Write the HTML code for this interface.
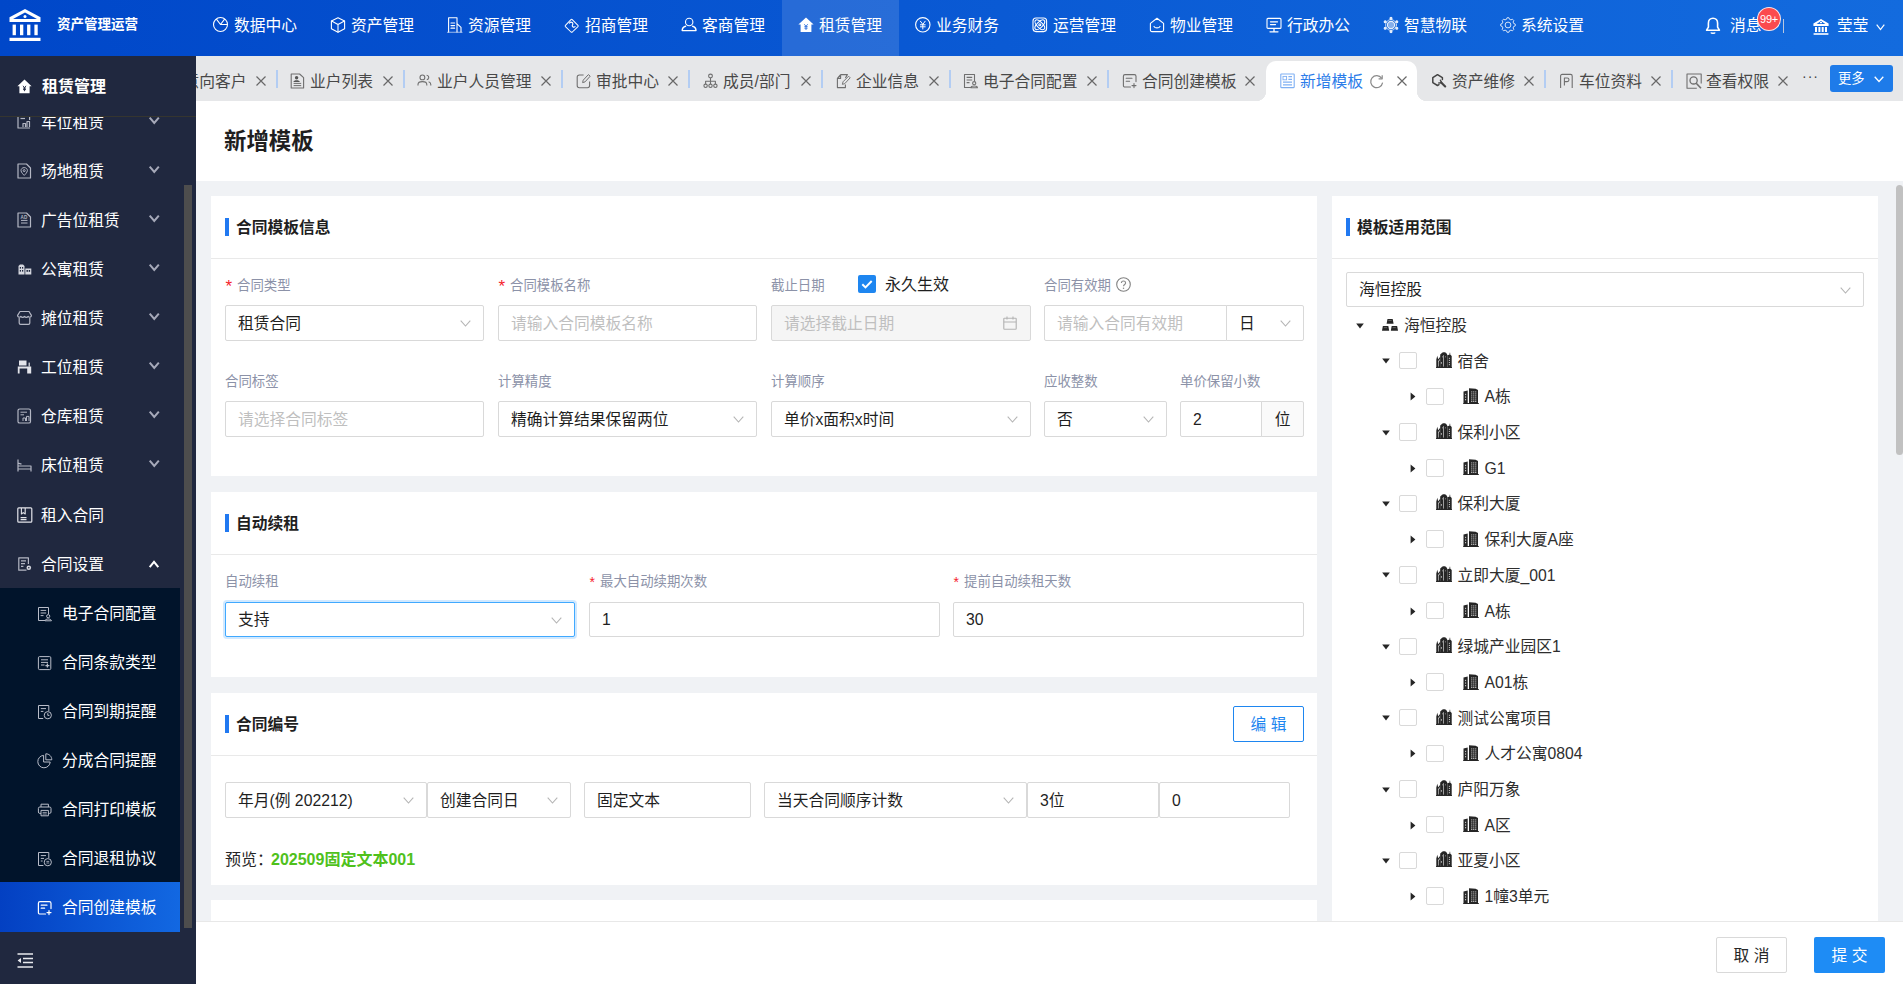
<!DOCTYPE html>
<html lang="zh-CN"><head><meta charset="utf-8"><title>新增模板</title>
<style>
*{box-sizing:border-box;margin:0;padding:0}
html,body{width:1903px;height:984px;overflow:hidden;background:#f0f2f5;}
body{font-family:"Liberation Sans","Noto Sans CJK SC",sans-serif;font-size:15.75px;color:#1f1f1f;position:relative;-webkit-font-smoothing:antialiased;}
.abs{position:absolute}
.t{position:absolute;white-space:nowrap;line-height:24px;height:24px}
svg{position:absolute;overflow:visible}
#hdr{position:absolute;left:0;top:0;width:1903px;height:56px;background:linear-gradient(90deg,#0047c9 0%,#136bde 100%)}
#hdr .t{color:#fff;font-size:15.75px}
#navact{position:absolute;left:782px;top:0;width:117px;height:56px;background:rgba(255,255,255,.13)}
#side{position:absolute;left:0;top:56px;width:196px;height:928px;background:#20283f;overflow:hidden}
#side .t{color:#fff;font-size:15.75px}
#sub{position:absolute;left:0;top:532px;width:180px;height:294px;background:#01142b}
#sel{position:absolute;left:0;top:826px;width:180px;height:50px;background:linear-gradient(90deg,#0340c2,#1268e2)}
#sidehead{position:absolute;left:0;top:0;width:196px;height:61px;background:#20283f;border-bottom:1px solid #35352f}
#thumb{position:absolute;left:184px;top:129px;width:8px;height:743px;background:#4d4d4d}
#tabs{position:absolute;left:196px;top:56px;width:1707px;height:44.6px;background:#e6e7e9;overflow:hidden}
#tabs .t{font-size:15.75px;color:#484848}
.sep{position:absolute;top:14px;width:2px;height:18px;background:#b3cdf3}
#acttab{position:absolute;left:1070px;top:5px;width:151px;height:39.6px;background:#fff;border-radius:10px 10px 0 0}
#acttab:before{content:"";position:absolute;left:-10px;bottom:0;width:10px;height:10px;background:radial-gradient(circle at 0 0,rgba(255,255,255,0) 10px,#fff 10.5px)}
#acttab:after{content:"";position:absolute;right:-10px;bottom:0;width:10px;height:10px;background:radial-gradient(circle at 100% 0,rgba(255,255,255,0) 10px,#fff 10.5px)}
#more{position:absolute;left:1634px;top:9px;width:63px;height:27px;background:#1e7be9;border-radius:3px}
#title{position:absolute;left:196px;top:100.6px;width:1707px;height:80.4px;background:#fff}
.card{position:absolute;background:#fff}
.ct{position:absolute;font-size:15.75px;font-weight:bold;color:#1f1f1f;line-height:24px;white-space:nowrap}
.bar{position:absolute;width:3.5px;height:18px;background:#2179f1}
.hr{position:absolute;height:1px;background:#e9e9e9}
.lb{position:absolute;font-size:13.4px;color:#8c92a8;line-height:20px;white-space:nowrap}
.req{position:absolute;left:0;top:0;color:#f5222d}
.in{position:absolute;border:1px solid #d9d9d9;border-radius:2px;background:#fff;font-size:15.75px;line-height:34px;padding-left:12px;white-space:nowrap;color:#1f1f1f;overflow:hidden}
.ph{color:#bfbfbf}
.dis{background:#f5f5f5}
.chk{position:absolute;width:17.5px;height:17.5px;border:1px solid #d9d9d9;border-radius:2px;background:#fff}
.tr{position:absolute;font-size:15.75px;line-height:24px;white-space:nowrap;color:#2e2e2e}
#foot{position:absolute;left:196px;top:921px;width:1707px;height:63px;background:#fff;border-top:1px solid #e8e8e8}
.btn{position:absolute;border-radius:2px;font-size:15.75px;text-align:center;white-space:nowrap}
</style></head>
<body>
<div id="hdr">
<div id="navact"></div>
<svg style="left:9px;top:9px" width="32" height="32" viewBox="0 0 32 32"><g fill="#fff"><path d="M16 0L31.5 8.2V13H0.5V8.2z M16 3.6L4 10H28z" fill-rule="evenodd"/><circle cx="16" cy="7.6" r="1.5"/><rect x="3.6" y="15.6" width="3.3" height="10.6"/><rect x="11" y="15.6" width="3.3" height="10.6"/><rect x="18.1" y="15.6" width="3.3" height="10.6"/><rect x="25.4" y="15.6" width="3.3" height="10.6"/><rect x="0.5" y="28.8" width="31" height="3.2"/></g></svg>
<div class="t" style="left:57px;top:13px;font-size:13.5px;font-weight:bold">资产管理运营</div>
<svg style="left:213px;top:17px" width="16" height="16" viewBox="0 0 16 16"><g fill="none" stroke="#fff" stroke-width="1.1" stroke-linejoin="round" stroke-linecap="round"><circle cx="7.5" cy="7.5" r="7"/><path d="M7.5 7.5L3.6 2.4M7.5 7.5L11.6 2.2M7.5 7.5H14.3"/></g></svg>
<div class="t" style="left:234px;top:13.5px;">数据中心</div>
<svg style="left:330px;top:17px" width="16" height="16" viewBox="0 0 16 16"><g fill="none" stroke="#fff" stroke-width="1.1" stroke-linejoin="round" stroke-linecap="round"><path d="M8 0.8L14.6 4V11.8L8 15.2L1.4 11.8V4z"/><path d="M1.6 4.1L8 7.4L14.4 4.1M8 7.4V15"/></g></svg>
<div class="t" style="left:351px;top:13.5px;">资产管理</div>
<svg style="left:447px;top:17px" width="16" height="16" viewBox="0 0 16 16"><g fill="none" stroke="#fff" stroke-width="1.1" stroke-linejoin="round" stroke-linecap="round"><path d="M1.6 15V0.8H10V15M10 6.6L14 10.4V15"/><path d="M4 6H7.6M4 8.6H7.6M4 11.2H7.6" stroke-width="1.2"/><path d="M0.4 15.3H15" opacity=".6"/></g></svg>
<div class="t" style="left:468px;top:13.5px;">资源管理</div>
<svg style="left:564px;top:17px" width="16" height="16" viewBox="0 0 16 16"><g fill="none" stroke="#fff" stroke-width="1.1" stroke-linejoin="round" stroke-linecap="round" transform="translate(0.6 1.1) scale(.92)"><path d="M6.9 1.7Q7.6 1 8.3 1.7L14.5 7.8Q15.1 8.5 14.5 9.2L8.4 15.1Q7.7 15.7 7 15.1L0.9 9.2Q0.3 8.5 0.9 7.8z"/><path d="M5.2 5.4C7.2 3.2 10 5.4 8.6 7.4C7.6 8.8 9.6 10.8 11.4 9.2" stroke-width="1.2"/></g></svg>
<div class="t" style="left:585px;top:13.5px;">招商管理</div>
<svg style="left:681px;top:17px" width="16" height="16" viewBox="0 0 16 16"><g fill="none" stroke="#fff" stroke-width="1.1" stroke-linejoin="round" stroke-linecap="round"><circle cx="8.2" cy="5" r="3.7"/><path d="M4.6 9.2C2.4 9.8 1.2 11.4 1.2 13.6H15C15 11.4 13.8 9.8 11.6 9.2" stroke-width="1.4"/></g></svg>
<div class="t" style="left:702px;top:13.5px;">客商管理</div>
<svg style="left:798px;top:17px" width="16" height="16" viewBox="0 0 16 16"><path d="M8 0.6L15.6 7.6H13.4V15H2.6V7.6H0.4z" fill="#fff"/><path d="M6.3 7.2L8 9.3L9.7 7.2M6.4 9.6H9.6M6.4 11.2H9.6M8 9.3V13" stroke="#2f6fdc" stroke-width="0.9" fill="none"/></svg>
<div class="t" style="left:819px;top:13.5px;">租赁管理</div>
<svg style="left:915px;top:17px" width="16" height="16" viewBox="0 0 16 16"><g fill="none" stroke="#fff" stroke-width="1.1" stroke-linejoin="round" stroke-linecap="round"><circle cx="7.8" cy="7.8" r="7.2"/><path d="M5.4 4.2L7.8 7.4L10.2 4.2M5.4 7.8H10.2M5.4 9.8H10.2M7.8 7.4V12" stroke-width="1"/></g></svg>
<div class="t" style="left:936px;top:13.5px;">业务财务</div>
<svg style="left:1032px;top:17px" width="16" height="16" viewBox="0 0 16 16"><g fill="none" stroke="#fff" stroke-width="1.1" stroke-linejoin="round" stroke-linecap="round"><rect x="1" y="1" width="13.6" height="13.6" rx="3"/><ellipse cx="7.8" cy="7.8" rx="6.2" ry="2.8" transform="rotate(45 7.8 7.8)"/><ellipse cx="7.8" cy="7.8" rx="6.2" ry="2.8" transform="rotate(-45 7.8 7.8)"/><circle cx="7.8" cy="7.8" r="1"/></g></svg>
<div class="t" style="left:1053px;top:13.5px;">运营管理</div>
<svg style="left:1149px;top:17px" width="16" height="16" viewBox="0 0 16 16"><g fill="none" stroke="#fff" stroke-width="1.1" stroke-linejoin="round" stroke-linecap="round"><path d="M8 1.2L14.6 6.4V13C14.6 14 14 14.6 13 14.6H3C2 14.6 1.4 14 1.4 13V6.4z"/><path d="M5 9.4C6 11.4 10 11.4 11 9.4"/></g></svg>
<div class="t" style="left:1170px;top:13.5px;">物业管理</div>
<svg style="left:1266px;top:17px" width="16" height="16" viewBox="0 0 16 16"><g fill="none" stroke="#fff" stroke-width="1.1" stroke-linejoin="round" stroke-linecap="round"><rect x="1" y="1.4" width="14" height="10" rx="1"/><path d="M4.5 4.8H11.5M4.5 7.6H9.5M8 11.6V14.4M4 14.8H12" stroke-width="1.3"/></g></svg>
<div class="t" style="left:1287px;top:13.5px;">行政办公</div>
<svg style="left:1383px;top:17px" width="16" height="16" viewBox="0 0 16 16"><g fill="none" stroke="#fff" stroke-width="1.1" stroke-linejoin="round" stroke-linecap="round" opacity=".9"><circle cx="8" cy="8" r="3.6" fill="rgba(255,255,255,.55)"/><circle cx="8" cy="8" r="5.4" stroke-width=".8"/><circle cx="8" cy="1.4" r="1" fill="#fff"/><circle cx="13.8" cy="4.8" r="1" fill="#fff"/><circle cx="13.8" cy="11.2" r="1" fill="#fff"/><circle cx="8" cy="14.6" r="1" fill="#fff"/><circle cx="2.2" cy="11.2" r="1" fill="#fff"/><circle cx="2.2" cy="4.8" r="1" fill="#fff"/></g></svg>
<div class="t" style="left:1404px;top:13.5px;">智慧物联</div>
<svg style="left:1500px;top:17px" width="16" height="16" viewBox="0 0 16 16"><g fill="none" stroke="#fff" stroke-width="0.9" stroke-linejoin="round" opacity=".92"><path d="M7.05 0.76L8.95 0.76L9.53 2.30L10.95 2.89L12.45 2.21L13.79 3.55L13.11 5.05L13.70 6.47L15.24 7.05L15.24 8.95L13.70 9.53L13.11 10.95L13.79 12.45L12.45 13.79L10.95 13.11L9.53 13.70L8.95 15.24L7.05 15.24L6.47 13.70L5.05 13.11L3.55 13.79L2.21 12.45L2.89 10.95L2.30 9.53L0.76 8.95L0.76 7.05L2.30 6.47L2.89 5.05L2.21 3.55L3.55 2.21L5.05 2.89L6.47 2.30z"/><circle cx="8" cy="8" r="2.9"/></g></svg>
<div class="t" style="left:1521px;top:13.5px;">系统设置</div>
<svg style="left:1705px;top:16.5px" width="16" height="18" viewBox="0 0 16 18"><path d="M8 1.2C5.2 1.2 3.4 3.4 3.4 6.2V10.2L1.6 13.2H14.4L12.6 10.2V6.2C12.6 3.4 10.8 1.2 8 1.2z" fill="none" stroke="#fff" stroke-width="1.6" stroke-linejoin="round"/><path d="M6 15.4C6.4 16.6 9.6 16.6 10 15.4" fill="none" stroke="#fff" stroke-width="1.6"/></svg>
<div class="t" style="left:1730px;top:13.5px;">消息</div>
<div class="abs" style="left:1757px;top:7px;width:24px;height:24px;border-radius:12px;background:#fb4b4e;border:1px solid rgba(255,255,255,.85);color:#fff;font-size:11px;line-height:22px;text-align:center;letter-spacing:-.2px">99+</div>
<div class="abs" style="left:1783px;top:19px;width:1px;height:14px;background:rgba(255,240,225,.7)"></div>
<svg style="left:1813px;top:19px" width="16" height="16" viewBox="0 0 16 16"><g fill="#fff"><path d="M8 0L15.6 4.6V7H0.4V4.6z M8 2L3.6 5H12.4z" fill-rule="evenodd"/><rect x="2" y="8" width="2" height="5"/><rect x="5.4" y="8" width="2" height="5"/><rect x="8.7" y="8" width="2" height="5"/><rect x="12" y="8" width="2" height="5"/><rect x="0.6" y="14.2" width="14.8" height="1.6"/><rect x="7" y="3" width="2" height="1.2"/></g></svg>
<div class="t" style="left:1837px;top:13.5px;">莹莹</div>
<svg style="left:1875.5px;top:23.5px" width="9" height="6" viewBox="0 0 9 6"><path d="M0.7 0.7 L4.5 5.5 L8.3 0.7" fill="none" stroke="#fff" stroke-width="1.2"/></svg>
</div>
<div id="side">
<svg style="left:17px;top:58px" width="15" height="16" viewBox="0 0 15 16"><g fill="none" stroke="#b4b7c4" stroke-width="1.2" stroke-linejoin="round"><path d="M1 2V14H13"/><path d="M3.5 4.5H8" /><path d="M6 13V9.5H8.5V13M10 13V7.5H12.5V13M12.6 2V6"/></g></svg>
<div class="t" style="left:41px;top:55.1px;">车位租赁</div>
<svg style="left:149px;top:60.8px" width="10.5" height="6.5" viewBox="0 0 10.5 6.5"><path d="M0.7 0.7 L5.25 6 L9.8 0.7" fill="none" stroke="#a6a9b9" stroke-width="2"/></svg>
<svg style="left:17px;top:107px" width="15" height="16" viewBox="0 0 15 16"><g fill="none" stroke="#b4b7c4" stroke-width="1.2" stroke-linejoin="round"><path d="M1 1H9.5L13.5 5V15H1z"/><path d="M7.2 4.6C9.2 4.6 10.4 6 10.4 7.6C10.4 9.4 7.2 12.4 7.2 12.4C7.2 12.4 4 9.4 4 7.6C4 6 5.2 4.6 7.2 4.6z" stroke-width="1"/><circle cx="7.2" cy="7.6" r="1" stroke-width="1"/></g></svg>
<div class="t" style="left:41px;top:104.1px;">场地租赁</div>
<svg style="left:149px;top:109.8px" width="10.5" height="6.5" viewBox="0 0 10.5 6.5"><path d="M0.7 0.7 L5.25 6 L9.8 0.7" fill="none" stroke="#a6a9b9" stroke-width="2"/></svg>
<svg style="left:17px;top:156px" width="15" height="16" viewBox="0 0 15 16"><g fill="none" stroke="#b4b7c4" stroke-width="1.2" stroke-linejoin="round"><path d="M1 1H9.5L13.5 5V15H1z"/><path d="M4 11H10.5M4 8.4H10.5" stroke-width="1"/></g><text x="3.6" y="7" font-size="4.6" font-family="Liberation Sans,sans-serif" fill="#b4b7c4" font-weight="bold">AD</text></svg>
<div class="t" style="left:41px;top:153.1px;">广告位租赁</div>
<svg style="left:149px;top:158.8px" width="10.5" height="6.5" viewBox="0 0 10.5 6.5"><path d="M0.7 0.7 L5.25 6 L9.8 0.7" fill="none" stroke="#a6a9b9" stroke-width="2"/></svg>
<svg style="left:17px;top:205px" width="15" height="16" viewBox="0 0 15 16"><g fill="#d5d7df"><path d="M1.5 13.5V5L3 3.5H6L7.5 5V13.5z"/><rect x="8.3" y="7.5" width="6" height="6"/></g><g fill="#20283f"><rect x="2.8" y="6" width="1.2" height="1.6"/><rect x="5" y="6" width="1.2" height="1.6"/><rect x="2.8" y="9" width="1.2" height="1.6"/><rect x="5" y="9" width="1.2" height="1.6"/><rect x="9.5" y="9" width="1.4" height="1.8"/><rect x="11.7" y="9" width="1.4" height="1.8"/></g></svg>
<div class="t" style="left:41px;top:202.1px;">公寓租赁</div>
<svg style="left:149px;top:207.8px" width="10.5" height="6.5" viewBox="0 0 10.5 6.5"><path d="M0.7 0.7 L5.25 6 L9.8 0.7" fill="none" stroke="#a6a9b9" stroke-width="2"/></svg>
<svg style="left:17px;top:254px" width="15" height="16" viewBox="0 0 15 16"><g fill="none" stroke="#b4b7c4" stroke-width="1.2" stroke-linejoin="round"><path d="M3 1.5H12L14.4 5.4C14.4 7.4 12 7.8 11.2 6.4C10.2 7.8 8.4 7.8 7.5 6.4C6.6 7.8 4.8 7.8 3.8 6.4C3 7.8 0.6 7.4 0.6 5.4z"/><path d="M2.2 8V13C2.2 14 2.8 14.4 3.6 14.4H11.4C12.2 14.4 12.8 14 12.8 13V8"/></g></svg>
<div class="t" style="left:41px;top:251.1px;">摊位租赁</div>
<svg style="left:149px;top:256.8px" width="10.5" height="6.5" viewBox="0 0 10.5 6.5"><path d="M0.7 0.7 L5.25 6 L9.8 0.7" fill="none" stroke="#a6a9b9" stroke-width="2"/></svg>
<svg style="left:17px;top:303px" width="15" height="16" viewBox="0 0 15 16"><g fill="#e3e4ea"><rect x="2" y="1.5" width="7.5" height="5"/><path d="M0.8 7.5H14.2V14.5H10.2V9.6H2.6V14.5H0.8z"/><rect x="11.6" y="3.6" width="1.2" height="4"/></g></svg>
<div class="t" style="left:41px;top:300.1px;">工位租赁</div>
<svg style="left:149px;top:305.8px" width="10.5" height="6.5" viewBox="0 0 10.5 6.5"><path d="M0.7 0.7 L5.25 6 L9.8 0.7" fill="none" stroke="#a6a9b9" stroke-width="2"/></svg>
<svg style="left:17px;top:352px" width="15" height="16" viewBox="0 0 15 16"><g fill="none" stroke="#b4b7c4" stroke-width="1.2" stroke-linejoin="round"><rect x="1" y="1" width="12.5" height="14" rx="1.6"/><path d="M3.5 4.2H10M3.5 6.8H7" stroke-width="1"/><path d="M6 13V10H8.5V13M9.5 13V8.4H12V13" stroke-width="1"/></g></svg>
<div class="t" style="left:41px;top:349.1px;">仓库租赁</div>
<svg style="left:149px;top:354.8px" width="10.5" height="6.5" viewBox="0 0 10.5 6.5"><path d="M0.7 0.7 L5.25 6 L9.8 0.7" fill="none" stroke="#a6a9b9" stroke-width="2"/></svg>
<svg style="left:17px;top:401px" width="15" height="16" viewBox="0 0 15 16"><g fill="none" stroke="#b4b7c4" stroke-width="1.2" stroke-linejoin="round" stroke-width="1"><path d="M1 2.5V14.5M1 6.2L4.5 7.2M1 9H14V14.5M1 12H14"/></g></svg>
<div class="t" style="left:41px;top:398.1px;">床位租赁</div>
<svg style="left:149px;top:403.8px" width="10.5" height="6.5" viewBox="0 0 10.5 6.5"><path d="M0.7 0.7 L5.25 6 L9.8 0.7" fill="none" stroke="#a6a9b9" stroke-width="2"/></svg>
<svg style="left:17px;top:451px" width="15" height="16" viewBox="0 0 15 16"><g fill="none" stroke="#e3e4ea" stroke-width="1.2" stroke-linejoin="round"><rect x="0.8" y="0.8" width="14" height="14.4" rx="1"/><path d="M4.4 1V7L6.3 5.6L8.2 7V1M3.6 10.6H9.5M3.6 12.6H9.5" stroke-width="1.1"/></g></svg>
<div class="t" style="left:41px;top:448.1px;">租入合同</div>
<svg style="left:17px;top:500px" width="15" height="16" viewBox="0 0 15 16"><g fill="none" stroke="#b4b7c4" stroke-width="1.2" stroke-linejoin="round" stroke-width="1.1"><path d="M9.5 14.2H1.8V1.8H11.4V8"/><path d="M4 4.8H9M4 7.6H8M4 10.4H6.4"/></g><circle cx="11.8" cy="11.8" r="2.3" fill="#d5d7df"/><circle cx="11.8" cy="11.8" r="0.8" fill="#20283f"/></svg>
<div class="t" style="left:41px;top:497.1px;">合同设置</div>
<svg style="left:149px;top:504.5px" width="10" height="6.5" viewBox="0 0 10 6.5"><path d="M0.7 6.2 L5 0.9 L9.3 6.2" fill="none" stroke="#fff" stroke-width="2"/></svg>
<div id="sub"></div><div id="sel"></div>
<svg style="left:37px;top:549.7px" width="16" height="16" viewBox="0 0 16 16"><g fill="none" stroke="#b9bdc9" stroke-width="1" stroke-linejoin="round"><path d="M8 14.5H1.5V1.5H11.5V8"/><path d="M3.6 4.4H9.2M3.6 7H9.2M3.6 9.6H6.5"/><circle cx="11.2" cy="10.2" r="1.6"/><path d="M8 14.8C8 12.4 14.4 12.4 14.4 14.8z"/></g></svg>
<div class="t" style="left:62px;top:546.1px;">电子合同配置</div>
<svg style="left:37px;top:598.7px" width="16" height="16" viewBox="0 0 16 16"><g fill="none" stroke="#b9bdc9" stroke-width="1" stroke-linejoin="round"><rect x="1.4" y="1.6" width="12.4" height="13" rx="1.2"/><path d="M4 4.8H11M4 7.4H11M4 10H7.5"/><path d="M8.4 10.6H12.4M10.4 8.6V12.6" stroke-width="1.3"/></g></svg>
<div class="t" style="left:62px;top:595.1px;">合同条款类型</div>
<svg style="left:37px;top:647.7px" width="16" height="16" viewBox="0 0 16 16"><g fill="none" stroke="#b9bdc9" stroke-width="1" stroke-linejoin="round"><path d="M6.2 14.5H1.5V1.5H11.8V7"/><path d="M3.8 4.6H9M3.8 7.4H6.4"/><circle cx="10.8" cy="11.2" r="3.6"/><path d="M10.8 9.2V11.4H12.4"/></g></svg>
<div class="t" style="left:62px;top:644.1px;">合同到期提醒</div>
<svg style="left:37px;top:696.7px" width="16" height="16" viewBox="0 0 16 16"><g fill="none" stroke="#b9bdc9" stroke-width="1" stroke-linejoin="round" stroke-width="1.2"><path d="M6.6 2.4A6.2 6.2 0 1 0 13.2 9H6.6z"/><path d="M8.8 0.8V6.8H14.8C14.8 3.4 12.2 0.8 8.8 0.8z"/></g></svg>
<div class="t" style="left:62px;top:693.1px;">分成合同提醒</div>
<svg style="left:37px;top:745.7px" width="16" height="16" viewBox="0 0 16 16"><g fill="none" stroke="#b9bdc9" stroke-width="1" stroke-linejoin="round"><path d="M4 5V2.2H11.4V5"/><rect x="1.4" y="5" width="12.6" height="6.4" rx="1.4"/><rect x="4" y="8.4" width="7.4" height="5.4" fill="#01142b"/><path d="M5.6 10.4H9.8M5.6 12H9.8" stroke-width=".8"/></g></svg>
<div class="t" style="left:62px;top:742.1px;">合同打印模板</div>
<svg style="left:37px;top:794.7px" width="16" height="16" viewBox="0 0 16 16"><g fill="none" stroke="#b9bdc9" stroke-width="1" stroke-linejoin="round"><path d="M6.4 14.5H1.5V1.5H11.8V7"/><path d="M3.8 4.6H9M3.8 7.4H7M3.8 10H5.6"/><circle cx="10.8" cy="11.2" r="3.6"/><path d="M9.4 10.4H12.2M9.4 12H12.2" stroke-width=".8"/></g></svg>
<div class="t" style="left:62px;top:791.1px;">合同退租协议</div>
<svg style="left:37px;top:843.7px" width="16" height="16" viewBox="0 0 16 16"><g fill="none" stroke="#fff" stroke-width="1.2" stroke-linejoin="round" stroke-linecap="round"><path d="M8.5 14H3C2 14 1.4 13.4 1.4 12.4V3.2C1.4 2.2 2 1.6 3 1.6H12.4C13.4 1.6 14 2.2 14 3.2V8.6"/><path d="M4.2 5.2H10M4.2 8.2H7.6M12 10.6V14.6M10 12.6H14"/></g></svg>
<div class="t" style="left:62px;top:840.1px;">合同创建模板</div>
<div id="sidehead"></div>
<svg style="left:17px;top:23px" width="15" height="15" viewBox="0 0 15 15"><path d="M7.5 0.6L14.6 7.2H12.6V14.2H2.4V7.2H0.4z" fill="#fff"/><path d="M6 6.8L7.5 8.8L9 6.8M6 9.1H9M6 10.6H9M7.5 8.8V12.2" stroke="#20283f" stroke-width="0.9" fill="none"/></svg>
<div class="t" style="left:42px;top:18.8px;font-weight:bold;font-size:16px">租赁管理</div>
<div id="thumb"></div>
<svg style="left:17px;top:897px" width="16" height="15" viewBox="0 0 16 15"><g fill="none" stroke="#e8e9ee" stroke-width="1.5"><path d="M0.5 1H16M6 5.5H16M6 9.5H16M0.5 14H16"/></g><path d="M0.6 7.5L4 5V10z" fill="#e8e9ee"/></svg>
</div>
<div id="tabs">
<div class="t" style="left:-12.5px;top:13.5px;color:#484848">意向客户</div>
<svg style="left:60px;top:20px" width="10" height="10" viewBox="0 0 10 10"><path d="M0.5 0.5L9.5 9.5M9.5 0.5L0.5 9.5" stroke="#686868" stroke-width="1.2" fill="none"/></svg>
<svg style="left:94px;top:17px" width="16" height="16" viewBox="0 0 16 16"><g fill="none" stroke="#6f6f6f" stroke-width="1.1" stroke-linejoin="round" stroke="#555" stroke-width="1.2"><path d="M1.2 1H9.6L13.6 4.6V15H1.2z"/><path d="M3.6 10.4H11.2M3.6 12.6H11.2" stroke-width="1"/></g><circle cx="6.6" cy="4.8" r="1.7" fill="#555"/><path d="M3.4 9C3.4 6.6 9.8 6.6 9.8 9z" fill="#555"/></svg>
<div class="t" style="left:114px;top:13.5px;color:#484848">业户列表</div>
<svg style="left:187px;top:20px" width="10" height="10" viewBox="0 0 10 10"><path d="M0.5 0.5L9.5 9.5M9.5 0.5L0.5 9.5" stroke="#686868" stroke-width="1.2" fill="none"/></svg>
<svg style="left:221px;top:17px" width="16" height="16" viewBox="0 0 16 16"><g fill="none" stroke="#6f6f6f" stroke-width="1.1" stroke-linejoin="round" stroke="#555" stroke-width="1.2"><circle cx="5.4" cy="4.4" r="2.4"/><path d="M1 12.6V11.4C1 9.6 2.6 8.6 5.4 8.6C8.2 8.6 9.8 9.6 9.8 11.4V12.6"/><path d="M9.6 2.2C11.4 2.4 12 4 11.6 5.2C11.3 6 10.6 6.5 9.8 6.6M11.6 8.8C13 9.2 13.8 10 13.8 11.4V12.6"/></g></svg>
<div class="t" style="left:241px;top:13.5px;color:#484848">业户人员管理</div>
<svg style="left:345px;top:20px" width="10" height="10" viewBox="0 0 10 10"><path d="M0.5 0.5L9.5 9.5M9.5 0.5L0.5 9.5" stroke="#686868" stroke-width="1.2" fill="none"/></svg>
<svg style="left:380px;top:17px" width="16" height="16" viewBox="0 0 16 16"><g fill="none" stroke="#6f6f6f" stroke-width="1.1" stroke-linejoin="round" stroke-width="1.3"><path d="M7.6 2H3.4C2 2 1.2 2.8 1.2 4.2V12.6C1.2 14 2 14.8 3.4 14.8H11.4C12.8 14.8 13.6 14 13.6 12.6V8.4"/><path d="M6.6 9.6L7.2 7.2L12.4 1.6L14.2 3.2L9 8.9z" stroke-width="1"/></g></svg>
<div class="t" style="left:400px;top:13.5px;color:#484848">审批中心</div>
<svg style="left:472px;top:20px" width="10" height="10" viewBox="0 0 10 10"><path d="M0.5 0.5L9.5 9.5M9.5 0.5L0.5 9.5" stroke="#686868" stroke-width="1.2" fill="none"/></svg>
<svg style="left:507px;top:17px" width="16" height="16" viewBox="0 0 16 16"><g fill="none" stroke="#6f6f6f" stroke-width="1.1" stroke-linejoin="round"><circle cx="7.5" cy="3" r="1.9"/><circle cx="2.6" cy="12.8" r="1.7"/><circle cx="7.5" cy="12.8" r="1.7"/><circle cx="12.4" cy="12.8" r="1.7"/><path d="M7.5 5V11M2.6 11V8.2H12.4V11"/></g></svg>
<div class="t" style="left:527px;top:13.5px;color:#484848">成员/部门</div>
<svg style="left:605px;top:20px" width="10" height="10" viewBox="0 0 10 10"><path d="M0.5 0.5L9.5 9.5M9.5 0.5L0.5 9.5" stroke="#686868" stroke-width="1.2" fill="none"/></svg>
<svg style="left:640px;top:17px" width="16" height="16" viewBox="0 0 16 16"><g fill="none" stroke="#6f6f6f" stroke-width="1.1" stroke-linejoin="round" stroke="#8a8a8a" stroke-width="1.2"><path d="M4.6 1.6H11.4L9.4 5M4.6 1.6L1.4 5.4V14.6H9.4V11.6M1.6 5.4H4.6V1.8"/><path d="M6.4 11.4L7 8.8L12.6 3.2L14.2 4.8L8.8 10.6z" stroke="#777" stroke-width="1"/></g></svg>
<div class="t" style="left:660px;top:13.5px;color:#484848">企业信息</div>
<svg style="left:733px;top:20px" width="10" height="10" viewBox="0 0 10 10"><path d="M0.5 0.5L9.5 9.5M9.5 0.5L0.5 9.5" stroke="#686868" stroke-width="1.2" fill="none"/></svg>
<svg style="left:767px;top:17px" width="16" height="16" viewBox="0 0 16 16"><g fill="none" stroke="#6f6f6f" stroke-width="1.1" stroke-linejoin="round" stroke="#8f8f8f"><path d="M8 14.5H1.5V1.5H11.5V8"/><path d="M3.6 4.4H9.2M3.6 7H9.2M3.6 9.6H6.5"/><circle cx="11.2" cy="10.2" r="1.6"/><path d="M8 14.8C8 12.4 14.4 12.4 14.4 14.8z"/></g></svg>
<div class="t" style="left:787px;top:13.5px;color:#484848">电子合同配置</div>
<svg style="left:891px;top:20px" width="10" height="10" viewBox="0 0 10 10"><path d="M0.5 0.5L9.5 9.5M9.5 0.5L0.5 9.5" stroke="#686868" stroke-width="1.2" fill="none"/></svg>
<svg style="left:926px;top:17px" width="16" height="16" viewBox="0 0 16 16"><g fill="none" stroke="#6f6f6f" stroke-width="1.1" stroke-linejoin="round" stroke="#555" stroke-width="1.3" stroke-linecap="round"><path d="M8.5 14H3C2 14 1.4 13.4 1.4 12.4V3.2C1.4 2.2 2 1.6 3 1.6H12.4C13.4 1.6 14 2.2 14 3.2V8.6"/><path d="M4.2 5.2H10M4.2 8.2H7.6M12 10.6V14.6M10 12.6H14" stroke-width="1.1"/></g></svg>
<div class="t" style="left:946px;top:13.5px;color:#484848">合同创建模板</div>
<svg style="left:1049px;top:20px" width="10" height="10" viewBox="0 0 10 10"><path d="M0.5 0.5L9.5 9.5M9.5 0.5L0.5 9.5" stroke="#686868" stroke-width="1.2" fill="none"/></svg>
<div class="sep" style="left:80px"></div>
<div class="sep" style="left:207px"></div>
<div class="sep" style="left:365px"></div>
<div class="sep" style="left:492px"></div>
<div class="sep" style="left:625px"></div>
<div class="sep" style="left:753px"></div>
<div class="sep" style="left:911px"></div>
<div class="sep" style="left:1348px"></div>
<div class="sep" style="left:1475px"></div>
<div id="acttab"></div>
<svg style="left:1084px;top:17px" width="16" height="16" viewBox="0 0 16 16"><g fill="none" stroke="#7fb0f3" stroke-width="1.1"><rect x="0.8" y="1" width="13.4" height="13.6" rx="0.6"/><rect x="3" y="3.4" width="3.6" height="3.4" stroke-width=".9"/><path d="M8.4 3.6H12M8.4 6.4H12M3 9.2H12M3 11.8H12" stroke-width="1.2"/></g></svg>
<div class="t" style="left:1104px;top:13.5px;color:#2b7ce9">新增模板</div>
<svg style="left:1173px;top:17.5px" width="15" height="15" viewBox="0 0 15 15"><g fill="none" stroke="#8a8a8a" stroke-width="1.2"><path d="M12.6 4.2A6 6 0 1 0 13.6 8.6"/><path d="M13.2 1.2V4.8H9.6" stroke-linejoin="round"/></g></svg>
<svg style="left:1201px;top:20px" width="10" height="10" viewBox="0 0 10 10"><path d="M0.5 0.5L9.5 9.5M9.5 0.5L0.5 9.5" stroke="#686868" stroke-width="1.2" fill="none"/></svg>
<svg style="left:1236px;top:17px" width="16" height="16" viewBox="0 0 16 16"><g fill="none" stroke="#444" stroke-width="1.5" stroke-linejoin="round" stroke-linecap="round"><path d="M10.4 6.6V4.7L5.5 1.7L0.8 4.7V9.6L5.5 12.5L7 11.7"/><path d="M8.4 7.2L9.6 9.6L6.8 10" stroke-width="1.4"/><path d="M9.2 9.4L13.2 13.4" stroke-width="2.1"/></g></svg>
<div class="t" style="left:1256px;top:13.5px;color:#484848">资产维修</div>
<svg style="left:1328px;top:20px" width="10" height="10" viewBox="0 0 10 10"><path d="M0.5 0.5L9.5 9.5M9.5 0.5L0.5 9.5" stroke="#686868" stroke-width="1.2" fill="none"/></svg>
<svg style="left:1363px;top:17px" width="16" height="16" viewBox="0 0 16 16"><g fill="none" stroke="#6f6f6f" stroke-width="1.1" stroke-linejoin="round" stroke="#555" stroke-width="1.2"><path d="M1.6 15V3C1.6 2 2.2 1.4 3.2 1.4H11.6C12.6 1.4 13.2 2 13.2 3V15"/><path d="M5.4 12.4V5H8.2C10.6 5 10.6 8.6 8.2 8.6H5.4" stroke-width="1.1"/></g></svg>
<div class="t" style="left:1383px;top:13.5px;color:#484848">车位资料</div>
<svg style="left:1455px;top:20px" width="10" height="10" viewBox="0 0 10 10"><path d="M0.5 0.5L9.5 9.5M9.5 0.5L0.5 9.5" stroke="#686868" stroke-width="1.2" fill="none"/></svg>
<svg style="left:1490px;top:17px" width="16" height="16" viewBox="0 0 16 16"><g fill="none" stroke="#6f6f6f" stroke-width="1.1" stroke-linejoin="round" stroke="#444" stroke-width="1.4"><path d="M10.8 15.2H1V1H15.2V10.6"/><circle cx="7.6" cy="7.4" r="3.6" stroke-width="1.3"/><path d="M10.2 10.2L15 15.2" stroke-width="1.6"/></g></svg>
<div class="t" style="left:1510px;top:13.5px;color:#484848">查看权限</div>
<svg style="left:1582px;top:20px" width="10" height="10" viewBox="0 0 10 10"><path d="M0.5 0.5L9.5 9.5M9.5 0.5L0.5 9.5" stroke="#686868" stroke-width="1.2" fill="none"/></svg>
<div class="t" style="left:1606px;top:8px;font-size:14px;letter-spacing:1px;color:#444">···</div>
<div id="more"></div>
<div class="t" style="left:1642px;top:10.5px;color:#fff;font-size:13.3px">更多</div>
<svg style="left:1678px;top:19.5px" width="10" height="6" viewBox="0 0 10 6"><path d="M0.7 0.7 L5 5.5 L9.3 0.7" fill="none" stroke="#fff" stroke-width="1.3"/></svg>
</div>
<div id="title"></div>
<div class="t" style="left:224px;top:126.3px;font-size:22.4px;font-weight:bold;color:#1f1f1f;line-height:32px;height:32px">新增模板</div>
<div class="card" style="left:211px;top:196px;width:1106px;height:280px"></div>
<div class="bar" style="left:225px;top:218px"></div>
<div class="ct" style="left:236px;top:215.8px">合同模板信息</div>
<div class="hr" style="left:211px;top:258px;width:1106px"></div>
<div class="lb" style="left:225.5px;top:277px;color:#f5222d;font-size:17px">*</div>
<div class="lb" style="left:237px;top:275.5px">合同类型</div>
<div class="lb" style="left:498.5px;top:277px;color:#f5222d;font-size:17px">*</div>
<div class="lb" style="left:510px;top:275.5px">合同模板名称</div>
<div class="lb" style="left:771px;top:275.5px">截止日期</div>
<div class="lb" style="left:1044px;top:275.5px">合同有效期</div>
<svg style="left:1116px;top:277px" width="15" height="15" viewBox="0 0 15 15"><circle cx="7.5" cy="7.5" r="6.8" fill="none" stroke="#828282" stroke-width="1.1"/><path d="M5.4 6C5.4 3.4 9.6 3.4 9.6 6C9.6 7.4 7.5 7.6 7.5 9.3" fill="none" stroke="#8a8a8a" stroke-width="1.1"/><circle cx="7.5" cy="11.2" r=".75" fill="#8a8a8a"/></svg>
<div class="abs" style="left:858px;top:275px;width:18px;height:18px;background:#1e86f0;border-radius:2px"></div>
<svg style="left:858px;top:275px" width="18" height="18" viewBox="0 0 18 18"><path d="M4.3 9.2l3.2 3.2 6.2-6.4" fill="none" stroke="#fff" stroke-width="2"/></svg>
<div class="t" style="left:885px;top:272.5px;font-size:16px;color:#1f1f1f">永久生效</div>
<div class="in " style="left:225px;top:305px;width:259px;height:36px;line-height:35px;">租赁合同</div>
<svg style="left:460px;top:320px" width="11" height="6.5" viewBox="0 0 11 6.5"><path d="M0.7 0.7 L5.5 6 L10.3 0.7" fill="none" stroke="#b5b5b5" stroke-width="1.1"/></svg>
<div class="in  ph" style="left:498px;top:305px;width:259px;height:36px;line-height:35px;">请输入合同模板名称</div>
<div class="in dis ph" style="left:771px;top:305px;width:260px;height:36px;line-height:35px;">请选择截止日期</div>
<svg style="left:1003px;top:316px" width="14" height="14" viewBox="0 0 14 14"><g fill="none" stroke="#b4b4b4" stroke-width="1.15"><rect x="0.8" y="2.2" width="12.4" height="11" rx="0.6"/><path d="M0.8 6H13.2M4 0.6V3.6M10 0.6V3.6"/></g></svg>
<div class="in  ph" style="left:1044px;top:305px;width:183px;height:36px;line-height:35px;border-radius:2px 0 0 2px">请输入合同有效期</div>
<div class="in " style="left:1226px;top:305px;width:78px;height:36px;line-height:35px;border-radius:0 2px 2px 0">日</div>
<svg style="left:1280px;top:320px" width="11" height="6.5" viewBox="0 0 11 6.5"><path d="M0.7 0.7 L5.5 6 L10.3 0.7" fill="none" stroke="#b5b5b5" stroke-width="1.1"/></svg>
<div class="lb" style="left:225px;top:371.5px">合同标签</div>
<div class="lb" style="left:498px;top:371.5px">计算精度</div>
<div class="lb" style="left:771px;top:371.5px">计算顺序</div>
<div class="lb" style="left:1044px;top:371.5px">应收整数</div>
<div class="lb" style="left:1180px;top:371.5px">单价保留小数</div>
<div class="in  ph" style="left:225px;top:401px;width:259px;height:36px;line-height:35px;">请选择合同标签</div>
<div class="in " style="left:498px;top:401px;width:259px;height:36px;line-height:35px;">精确计算结果保留两位</div>
<svg style="left:733px;top:416px" width="11" height="6.5" viewBox="0 0 11 6.5"><path d="M0.7 0.7 L5.5 6 L10.3 0.7" fill="none" stroke="#b5b5b5" stroke-width="1.1"/></svg>
<div class="in " style="left:771px;top:401px;width:260px;height:36px;line-height:35px;">单价x面积x时间</div>
<svg style="left:1007px;top:416px" width="11" height="6.5" viewBox="0 0 11 6.5"><path d="M0.7 0.7 L5.5 6 L10.3 0.7" fill="none" stroke="#b5b5b5" stroke-width="1.1"/></svg>
<div class="in " style="left:1044px;top:401px;width:123px;height:36px;line-height:35px;">否</div>
<svg style="left:1143px;top:416px" width="11" height="6.5" viewBox="0 0 11 6.5"><path d="M0.7 0.7 L5.5 6 L10.3 0.7" fill="none" stroke="#b5b5b5" stroke-width="1.1"/></svg>
<div class="in " style="left:1180px;top:401px;width:82px;height:36px;line-height:35px;border-radius:2px 0 0 2px">2</div>
<div class="in " style="left:1261px;top:401px;width:43px;height:36px;line-height:35px;border-radius:0 2px 2px 0;background:#fafafa;padding-left:0;text-align:center">位</div>
<div class="card" style="left:211px;top:492px;width:1106px;height:185px"></div>
<div class="bar" style="left:225px;top:514px"></div>
<div class="ct" style="left:236px;top:511.8px">自动续租</div>
<div class="hr" style="left:211px;top:554px;width:1106px"></div>
<div class="lb" style="left:225px;top:571.5px">自动续租</div>
<div class="lb" style="left:589.5px;top:572px;color:#f5222d;font-size:14px">*</div>
<div class="lb" style="left:600px;top:571.5px">最大自动续期次数</div>
<div class="lb" style="left:953.5px;top:572px;color:#f5222d;font-size:14px">*</div>
<div class="lb" style="left:964px;top:571.5px">提前自动续租天数</div>
<div class="in " style="left:225px;top:602px;width:350px;height:35px;line-height:34px;border-color:#40a9ff;box-shadow:0 0 0 2px rgba(24,144,255,.2)">支持</div>
<svg style="left:551px;top:616.5px" width="11" height="6.5" viewBox="0 0 11 6.5"><path d="M0.7 0.7 L5.5 6 L10.3 0.7" fill="none" stroke="#b5b5b5" stroke-width="1.1"/></svg>
<div class="in " style="left:589px;top:602px;width:351px;height:35px;line-height:34px;">1</div>
<div class="in " style="left:953px;top:602px;width:351px;height:35px;line-height:34px;">30</div>
<div class="card" style="left:211px;top:693px;width:1106px;height:192px"></div>
<div class="bar" style="left:225px;top:715px"></div>
<div class="ct" style="left:236px;top:712.8px">合同编号</div>
<div class="hr" style="left:211px;top:755px;width:1106px"></div>
<div class="btn" style="left:1233px;top:706px;width:71px;height:36px;line-height:35px;border:1px solid #1e86f0;color:#1e86f0;background:#fff">编 辑</div>
<div class="in " style="left:225px;top:782px;width:202px;height:36px;line-height:35px;">年月(例 202212)</div>
<svg style="left:403px;top:797px" width="11" height="6.5" viewBox="0 0 11 6.5"><path d="M0.7 0.7 L5.5 6 L10.3 0.7" fill="none" stroke="#b5b5b5" stroke-width="1.1"/></svg>
<div class="in " style="left:427px;top:782px;width:144px;height:36px;line-height:35px;">创建合同日</div>
<svg style="left:547px;top:797px" width="11" height="6.5" viewBox="0 0 11 6.5"><path d="M0.7 0.7 L5.5 6 L10.3 0.7" fill="none" stroke="#b5b5b5" stroke-width="1.1"/></svg>
<div class="in " style="left:584px;top:782px;width:167px;height:36px;line-height:35px;">固定文本</div>
<div class="in " style="left:764px;top:782px;width:263px;height:36px;line-height:35px;">当天合同顺序计数</div>
<svg style="left:1003px;top:797px" width="11" height="6.5" viewBox="0 0 11 6.5"><path d="M0.7 0.7 L5.5 6 L10.3 0.7" fill="none" stroke="#b5b5b5" stroke-width="1.1"/></svg>
<div class="in " style="left:1027px;top:782px;width:132px;height:36px;line-height:35px;">3位</div>
<div class="in " style="left:1159px;top:782px;width:131px;height:36px;line-height:35px;">0</div>
<div class="t" style="left:225px;top:847.5px;font-size:16px;color:#262626">预览：</div>
<div class="t" style="left:271px;top:847.5px;font-size:16px;font-weight:bold;color:#4fc11c">202509固定文本001</div>
<div class="card" style="left:211px;top:900px;width:1106px;height:30px"></div>
<div class="card" style="left:1332px;top:196px;width:546px;height:760px"></div>
<div class="bar" style="left:1346px;top:218px"></div>
<div class="ct" style="left:1357px;top:215.8px">模板适用范围</div>
<div class="hr" style="left:1332px;top:258px;width:546px"></div>
<div class="in " style="left:1346px;top:272px;width:518px;height:35px;line-height:34px;">海恒控股</div>
<svg style="left:1840px;top:286.5px" width="11" height="6.5" viewBox="0 0 11 6.5"><path d="M0.7 0.7 L5.5 6 L10.3 0.7" fill="none" stroke="#b5b5b5" stroke-width="1.1"/></svg>
<svg style="left:1355.5px;top:322.6px" width="8" height="6" viewBox="0 0 8 6"><path d="M0.2 0.6L4 5.4L7.8 0.6z" fill="#262626"/></svg>
<svg style="left:1382px;top:319px" width="16" height="12" viewBox="0 0 16 12"><g fill="#262626"><path d="M5.5 0H10.7L11.6 4.7H4.6z"/><path d="M0.9 7H6.3L7.2 11.7H0z"/><path d="M9.7 7H15.1L16 11.7H8.8z"/></g><g fill="#fff" opacity=".35"><rect x="6.4" y="1.2" width="3.2" height=".8"/><rect x="1.8" y="8.3" width="3.2" height=".8"/><rect x="10.6" y="8.3" width="3.2" height=".8"/></g></svg>
<div class="tr" style="left:1404px;top:314px">海恒控股</div>
<svg style="left:1382px;top:358.29px" width="8" height="6" viewBox="0 0 8 6"><path d="M0.2 0.6L4 5.4L7.8 0.6z" fill="#262626"/></svg>
<div class="chk" style="left:1399.3px;top:351.99px"></div>
<svg style="left:1435.8px;top:351.69px" width="16" height="16" viewBox="0 0 16 16"><g fill="#262626"><path d="M0.3 16V7.6L1.3 3.8L2.2 7.2L4.4 4.4V16z"/><path d="M4.2 16V2.6L5.6 1.2C6.6 -0.2 9.4 -0.2 10.4 1.2L11.2 2.4V16z"/><path d="M11 16V3.4L13.6 2.6V0.8H14.2V2.6L15.7 4V16z"/><rect x="0.1" y="15" width="15.8" height="1"/></g><g fill="#fff"><path d="M2 9.2L3.8 7V8.2L2.6 9.8V14.6H2z" opacity=".85"/><rect x="7.3" y="3.2" width=".7" height="11.4" opacity=".8"/><rect x="4.9" y="10" width=".8" height="1.8" opacity=".8"/><rect x="6" y="4.2" width=".6" height="1.2" opacity=".7"/><rect x="9" y="4.2" width=".6" height="1.2" opacity=".6"/><rect x="12.9" y="5.8" width=".9" height="1.1" opacity=".85"/><rect x="12.9" y="7.9" width=".9" height="1.1" opacity=".85"/><rect x="12.9" y="10" width=".9" height="1.1" opacity=".85"/><rect x="12.9" y="12.1" width=".9" height="1.1" opacity=".85"/><rect x="11.1" y="4" width=".5" height="11" opacity=".45"/></g></svg>
<div class="tr" style="left:1457.6px;top:349.69px">宿舍</div>
<svg style="left:1409.5px;top:392.38px" width="6" height="9" viewBox="0 0 6 9"><path d="M0.6 0.6L5.4 4.5L0.6 8.4z" fill="#262626"/></svg>
<div class="chk" style="left:1426.3px;top:387.68px"></div>
<svg style="left:1463.3px;top:388.08px" width="16" height="16" viewBox="0 0 16 16"><g fill="#262626"><path d="M0.5 15.2V3.6L4.7 2.4V15.2z"/><path d="M6 15.2V0.2L12.6 0.8L15 2V15.2z"/><path d="M0 16L0.4 15H15.6L16 16z"/></g><g fill="#fff" opacity=".78"><rect x="2.1" y="5.8" width="1" height="1.3"/><rect x="2.1" y="8.4" width="1" height="1.3"/><rect x="2.1" y="11" width="1" height="1.3"/><rect x="8.2" y="3.4" width="1.1" height="1"/><rect x="10.2" y="3.4" width="1.1" height="1"/><rect x="12.2" y="3.4" width="1.1" height="1"/><rect x="8.2" y="5.4" width="1.1" height="1"/><rect x="10.2" y="5.4" width="1.1" height="1"/><rect x="12.2" y="5.4" width="1.1" height="1"/><rect x="8.2" y="7.4" width="1.1" height="1"/><rect x="10.2" y="7.4" width="1.1" height="1"/><rect x="12.2" y="7.4" width="1.1" height="1"/><rect x="8.2" y="9.4" width="1.1" height="1"/><rect x="10.2" y="9.4" width="1.1" height="1"/><rect x="12.2" y="9.4" width="1.1" height="1"/><rect x="8.2" y="11.4" width="1.1" height="1"/><rect x="10.2" y="11.4" width="1.1" height="1"/><rect x="12.2" y="11.4" width="1.1" height="1"/><rect x="8.2" y="13" width="1.1" height="1"/><rect x="10.2" y="13" width="1.1" height="1"/><rect x="12.2" y="13" width="1.1" height="1"/></g></svg>
<div class="tr" style="left:1484.6px;top:385.38px">A栋</div>
<svg style="left:1382px;top:429.67px" width="8" height="6" viewBox="0 0 8 6"><path d="M0.2 0.6L4 5.4L7.8 0.6z" fill="#262626"/></svg>
<div class="chk" style="left:1399.3px;top:423.37px"></div>
<svg style="left:1435.8px;top:423.07px" width="16" height="16" viewBox="0 0 16 16"><g fill="#262626"><path d="M0.3 16V7.6L1.3 3.8L2.2 7.2L4.4 4.4V16z"/><path d="M4.2 16V2.6L5.6 1.2C6.6 -0.2 9.4 -0.2 10.4 1.2L11.2 2.4V16z"/><path d="M11 16V3.4L13.6 2.6V0.8H14.2V2.6L15.7 4V16z"/><rect x="0.1" y="15" width="15.8" height="1"/></g><g fill="#fff"><path d="M2 9.2L3.8 7V8.2L2.6 9.8V14.6H2z" opacity=".85"/><rect x="7.3" y="3.2" width=".7" height="11.4" opacity=".8"/><rect x="4.9" y="10" width=".8" height="1.8" opacity=".8"/><rect x="6" y="4.2" width=".6" height="1.2" opacity=".7"/><rect x="9" y="4.2" width=".6" height="1.2" opacity=".6"/><rect x="12.9" y="5.8" width=".9" height="1.1" opacity=".85"/><rect x="12.9" y="7.9" width=".9" height="1.1" opacity=".85"/><rect x="12.9" y="10" width=".9" height="1.1" opacity=".85"/><rect x="12.9" y="12.1" width=".9" height="1.1" opacity=".85"/><rect x="11.1" y="4" width=".5" height="11" opacity=".45"/></g></svg>
<div class="tr" style="left:1457.6px;top:421.07px">保利小区</div>
<svg style="left:1409.5px;top:463.76px" width="6" height="9" viewBox="0 0 6 9"><path d="M0.6 0.6L5.4 4.5L0.6 8.4z" fill="#262626"/></svg>
<div class="chk" style="left:1426.3px;top:459.06px"></div>
<svg style="left:1463.3px;top:459.46px" width="16" height="16" viewBox="0 0 16 16"><g fill="#262626"><path d="M0.5 15.2V3.6L4.7 2.4V15.2z"/><path d="M6 15.2V0.2L12.6 0.8L15 2V15.2z"/><path d="M0 16L0.4 15H15.6L16 16z"/></g><g fill="#fff" opacity=".78"><rect x="2.1" y="5.8" width="1" height="1.3"/><rect x="2.1" y="8.4" width="1" height="1.3"/><rect x="2.1" y="11" width="1" height="1.3"/><rect x="8.2" y="3.4" width="1.1" height="1"/><rect x="10.2" y="3.4" width="1.1" height="1"/><rect x="12.2" y="3.4" width="1.1" height="1"/><rect x="8.2" y="5.4" width="1.1" height="1"/><rect x="10.2" y="5.4" width="1.1" height="1"/><rect x="12.2" y="5.4" width="1.1" height="1"/><rect x="8.2" y="7.4" width="1.1" height="1"/><rect x="10.2" y="7.4" width="1.1" height="1"/><rect x="12.2" y="7.4" width="1.1" height="1"/><rect x="8.2" y="9.4" width="1.1" height="1"/><rect x="10.2" y="9.4" width="1.1" height="1"/><rect x="12.2" y="9.4" width="1.1" height="1"/><rect x="8.2" y="11.4" width="1.1" height="1"/><rect x="10.2" y="11.4" width="1.1" height="1"/><rect x="12.2" y="11.4" width="1.1" height="1"/><rect x="8.2" y="13" width="1.1" height="1"/><rect x="10.2" y="13" width="1.1" height="1"/><rect x="12.2" y="13" width="1.1" height="1"/></g></svg>
<div class="tr" style="left:1484.6px;top:456.76px">G1</div>
<svg style="left:1382px;top:501.05px" width="8" height="6" viewBox="0 0 8 6"><path d="M0.2 0.6L4 5.4L7.8 0.6z" fill="#262626"/></svg>
<div class="chk" style="left:1399.3px;top:494.75px"></div>
<svg style="left:1435.8px;top:494.45px" width="16" height="16" viewBox="0 0 16 16"><g fill="#262626"><path d="M0.3 16V7.6L1.3 3.8L2.2 7.2L4.4 4.4V16z"/><path d="M4.2 16V2.6L5.6 1.2C6.6 -0.2 9.4 -0.2 10.4 1.2L11.2 2.4V16z"/><path d="M11 16V3.4L13.6 2.6V0.8H14.2V2.6L15.7 4V16z"/><rect x="0.1" y="15" width="15.8" height="1"/></g><g fill="#fff"><path d="M2 9.2L3.8 7V8.2L2.6 9.8V14.6H2z" opacity=".85"/><rect x="7.3" y="3.2" width=".7" height="11.4" opacity=".8"/><rect x="4.9" y="10" width=".8" height="1.8" opacity=".8"/><rect x="6" y="4.2" width=".6" height="1.2" opacity=".7"/><rect x="9" y="4.2" width=".6" height="1.2" opacity=".6"/><rect x="12.9" y="5.8" width=".9" height="1.1" opacity=".85"/><rect x="12.9" y="7.9" width=".9" height="1.1" opacity=".85"/><rect x="12.9" y="10" width=".9" height="1.1" opacity=".85"/><rect x="12.9" y="12.1" width=".9" height="1.1" opacity=".85"/><rect x="11.1" y="4" width=".5" height="11" opacity=".45"/></g></svg>
<div class="tr" style="left:1457.6px;top:492.45px">保利大厦</div>
<svg style="left:1409.5px;top:535.14px" width="6" height="9" viewBox="0 0 6 9"><path d="M0.6 0.6L5.4 4.5L0.6 8.4z" fill="#262626"/></svg>
<div class="chk" style="left:1426.3px;top:530.44px"></div>
<svg style="left:1463.3px;top:530.84px" width="16" height="16" viewBox="0 0 16 16"><g fill="#262626"><path d="M0.5 15.2V3.6L4.7 2.4V15.2z"/><path d="M6 15.2V0.2L12.6 0.8L15 2V15.2z"/><path d="M0 16L0.4 15H15.6L16 16z"/></g><g fill="#fff" opacity=".78"><rect x="2.1" y="5.8" width="1" height="1.3"/><rect x="2.1" y="8.4" width="1" height="1.3"/><rect x="2.1" y="11" width="1" height="1.3"/><rect x="8.2" y="3.4" width="1.1" height="1"/><rect x="10.2" y="3.4" width="1.1" height="1"/><rect x="12.2" y="3.4" width="1.1" height="1"/><rect x="8.2" y="5.4" width="1.1" height="1"/><rect x="10.2" y="5.4" width="1.1" height="1"/><rect x="12.2" y="5.4" width="1.1" height="1"/><rect x="8.2" y="7.4" width="1.1" height="1"/><rect x="10.2" y="7.4" width="1.1" height="1"/><rect x="12.2" y="7.4" width="1.1" height="1"/><rect x="8.2" y="9.4" width="1.1" height="1"/><rect x="10.2" y="9.4" width="1.1" height="1"/><rect x="12.2" y="9.4" width="1.1" height="1"/><rect x="8.2" y="11.4" width="1.1" height="1"/><rect x="10.2" y="11.4" width="1.1" height="1"/><rect x="12.2" y="11.4" width="1.1" height="1"/><rect x="8.2" y="13" width="1.1" height="1"/><rect x="10.2" y="13" width="1.1" height="1"/><rect x="12.2" y="13" width="1.1" height="1"/></g></svg>
<div class="tr" style="left:1484.6px;top:528.14px">保利大厦A座</div>
<svg style="left:1382px;top:572.43px" width="8" height="6" viewBox="0 0 8 6"><path d="M0.2 0.6L4 5.4L7.8 0.6z" fill="#262626"/></svg>
<div class="chk" style="left:1399.3px;top:566.13px"></div>
<svg style="left:1435.8px;top:565.83px" width="16" height="16" viewBox="0 0 16 16"><g fill="#262626"><path d="M0.3 16V7.6L1.3 3.8L2.2 7.2L4.4 4.4V16z"/><path d="M4.2 16V2.6L5.6 1.2C6.6 -0.2 9.4 -0.2 10.4 1.2L11.2 2.4V16z"/><path d="M11 16V3.4L13.6 2.6V0.8H14.2V2.6L15.7 4V16z"/><rect x="0.1" y="15" width="15.8" height="1"/></g><g fill="#fff"><path d="M2 9.2L3.8 7V8.2L2.6 9.8V14.6H2z" opacity=".85"/><rect x="7.3" y="3.2" width=".7" height="11.4" opacity=".8"/><rect x="4.9" y="10" width=".8" height="1.8" opacity=".8"/><rect x="6" y="4.2" width=".6" height="1.2" opacity=".7"/><rect x="9" y="4.2" width=".6" height="1.2" opacity=".6"/><rect x="12.9" y="5.8" width=".9" height="1.1" opacity=".85"/><rect x="12.9" y="7.9" width=".9" height="1.1" opacity=".85"/><rect x="12.9" y="10" width=".9" height="1.1" opacity=".85"/><rect x="12.9" y="12.1" width=".9" height="1.1" opacity=".85"/><rect x="11.1" y="4" width=".5" height="11" opacity=".45"/></g></svg>
<div class="tr" style="left:1457.6px;top:563.83px">立即大厦_001</div>
<svg style="left:1409.5px;top:606.52px" width="6" height="9" viewBox="0 0 6 9"><path d="M0.6 0.6L5.4 4.5L0.6 8.4z" fill="#262626"/></svg>
<div class="chk" style="left:1426.3px;top:601.82px"></div>
<svg style="left:1463.3px;top:602.22px" width="16" height="16" viewBox="0 0 16 16"><g fill="#262626"><path d="M0.5 15.2V3.6L4.7 2.4V15.2z"/><path d="M6 15.2V0.2L12.6 0.8L15 2V15.2z"/><path d="M0 16L0.4 15H15.6L16 16z"/></g><g fill="#fff" opacity=".78"><rect x="2.1" y="5.8" width="1" height="1.3"/><rect x="2.1" y="8.4" width="1" height="1.3"/><rect x="2.1" y="11" width="1" height="1.3"/><rect x="8.2" y="3.4" width="1.1" height="1"/><rect x="10.2" y="3.4" width="1.1" height="1"/><rect x="12.2" y="3.4" width="1.1" height="1"/><rect x="8.2" y="5.4" width="1.1" height="1"/><rect x="10.2" y="5.4" width="1.1" height="1"/><rect x="12.2" y="5.4" width="1.1" height="1"/><rect x="8.2" y="7.4" width="1.1" height="1"/><rect x="10.2" y="7.4" width="1.1" height="1"/><rect x="12.2" y="7.4" width="1.1" height="1"/><rect x="8.2" y="9.4" width="1.1" height="1"/><rect x="10.2" y="9.4" width="1.1" height="1"/><rect x="12.2" y="9.4" width="1.1" height="1"/><rect x="8.2" y="11.4" width="1.1" height="1"/><rect x="10.2" y="11.4" width="1.1" height="1"/><rect x="12.2" y="11.4" width="1.1" height="1"/><rect x="8.2" y="13" width="1.1" height="1"/><rect x="10.2" y="13" width="1.1" height="1"/><rect x="12.2" y="13" width="1.1" height="1"/></g></svg>
<div class="tr" style="left:1484.6px;top:599.52px">A栋</div>
<svg style="left:1382px;top:643.81px" width="8" height="6" viewBox="0 0 8 6"><path d="M0.2 0.6L4 5.4L7.8 0.6z" fill="#262626"/></svg>
<div class="chk" style="left:1399.3px;top:637.51px"></div>
<svg style="left:1435.8px;top:637.21px" width="16" height="16" viewBox="0 0 16 16"><g fill="#262626"><path d="M0.3 16V7.6L1.3 3.8L2.2 7.2L4.4 4.4V16z"/><path d="M4.2 16V2.6L5.6 1.2C6.6 -0.2 9.4 -0.2 10.4 1.2L11.2 2.4V16z"/><path d="M11 16V3.4L13.6 2.6V0.8H14.2V2.6L15.7 4V16z"/><rect x="0.1" y="15" width="15.8" height="1"/></g><g fill="#fff"><path d="M2 9.2L3.8 7V8.2L2.6 9.8V14.6H2z" opacity=".85"/><rect x="7.3" y="3.2" width=".7" height="11.4" opacity=".8"/><rect x="4.9" y="10" width=".8" height="1.8" opacity=".8"/><rect x="6" y="4.2" width=".6" height="1.2" opacity=".7"/><rect x="9" y="4.2" width=".6" height="1.2" opacity=".6"/><rect x="12.9" y="5.8" width=".9" height="1.1" opacity=".85"/><rect x="12.9" y="7.9" width=".9" height="1.1" opacity=".85"/><rect x="12.9" y="10" width=".9" height="1.1" opacity=".85"/><rect x="12.9" y="12.1" width=".9" height="1.1" opacity=".85"/><rect x="11.1" y="4" width=".5" height="11" opacity=".45"/></g></svg>
<div class="tr" style="left:1457.6px;top:635.21px">绿城产业园区1</div>
<svg style="left:1409.5px;top:677.9px" width="6" height="9" viewBox="0 0 6 9"><path d="M0.6 0.6L5.4 4.5L0.6 8.4z" fill="#262626"/></svg>
<div class="chk" style="left:1426.3px;top:673.2px"></div>
<svg style="left:1463.3px;top:673.6px" width="16" height="16" viewBox="0 0 16 16"><g fill="#262626"><path d="M0.5 15.2V3.6L4.7 2.4V15.2z"/><path d="M6 15.2V0.2L12.6 0.8L15 2V15.2z"/><path d="M0 16L0.4 15H15.6L16 16z"/></g><g fill="#fff" opacity=".78"><rect x="2.1" y="5.8" width="1" height="1.3"/><rect x="2.1" y="8.4" width="1" height="1.3"/><rect x="2.1" y="11" width="1" height="1.3"/><rect x="8.2" y="3.4" width="1.1" height="1"/><rect x="10.2" y="3.4" width="1.1" height="1"/><rect x="12.2" y="3.4" width="1.1" height="1"/><rect x="8.2" y="5.4" width="1.1" height="1"/><rect x="10.2" y="5.4" width="1.1" height="1"/><rect x="12.2" y="5.4" width="1.1" height="1"/><rect x="8.2" y="7.4" width="1.1" height="1"/><rect x="10.2" y="7.4" width="1.1" height="1"/><rect x="12.2" y="7.4" width="1.1" height="1"/><rect x="8.2" y="9.4" width="1.1" height="1"/><rect x="10.2" y="9.4" width="1.1" height="1"/><rect x="12.2" y="9.4" width="1.1" height="1"/><rect x="8.2" y="11.4" width="1.1" height="1"/><rect x="10.2" y="11.4" width="1.1" height="1"/><rect x="12.2" y="11.4" width="1.1" height="1"/><rect x="8.2" y="13" width="1.1" height="1"/><rect x="10.2" y="13" width="1.1" height="1"/><rect x="12.2" y="13" width="1.1" height="1"/></g></svg>
<div class="tr" style="left:1484.6px;top:670.9px">A01栋</div>
<svg style="left:1382px;top:715.19px" width="8" height="6" viewBox="0 0 8 6"><path d="M0.2 0.6L4 5.4L7.8 0.6z" fill="#262626"/></svg>
<div class="chk" style="left:1399.3px;top:708.89px"></div>
<svg style="left:1435.8px;top:708.59px" width="16" height="16" viewBox="0 0 16 16"><g fill="#262626"><path d="M0.3 16V7.6L1.3 3.8L2.2 7.2L4.4 4.4V16z"/><path d="M4.2 16V2.6L5.6 1.2C6.6 -0.2 9.4 -0.2 10.4 1.2L11.2 2.4V16z"/><path d="M11 16V3.4L13.6 2.6V0.8H14.2V2.6L15.7 4V16z"/><rect x="0.1" y="15" width="15.8" height="1"/></g><g fill="#fff"><path d="M2 9.2L3.8 7V8.2L2.6 9.8V14.6H2z" opacity=".85"/><rect x="7.3" y="3.2" width=".7" height="11.4" opacity=".8"/><rect x="4.9" y="10" width=".8" height="1.8" opacity=".8"/><rect x="6" y="4.2" width=".6" height="1.2" opacity=".7"/><rect x="9" y="4.2" width=".6" height="1.2" opacity=".6"/><rect x="12.9" y="5.8" width=".9" height="1.1" opacity=".85"/><rect x="12.9" y="7.9" width=".9" height="1.1" opacity=".85"/><rect x="12.9" y="10" width=".9" height="1.1" opacity=".85"/><rect x="12.9" y="12.1" width=".9" height="1.1" opacity=".85"/><rect x="11.1" y="4" width=".5" height="11" opacity=".45"/></g></svg>
<div class="tr" style="left:1457.6px;top:706.59px">测试公寓项目</div>
<svg style="left:1409.5px;top:749.28px" width="6" height="9" viewBox="0 0 6 9"><path d="M0.6 0.6L5.4 4.5L0.6 8.4z" fill="#262626"/></svg>
<div class="chk" style="left:1426.3px;top:744.58px"></div>
<svg style="left:1463.3px;top:744.98px" width="16" height="16" viewBox="0 0 16 16"><g fill="#262626"><path d="M0.5 15.2V3.6L4.7 2.4V15.2z"/><path d="M6 15.2V0.2L12.6 0.8L15 2V15.2z"/><path d="M0 16L0.4 15H15.6L16 16z"/></g><g fill="#fff" opacity=".78"><rect x="2.1" y="5.8" width="1" height="1.3"/><rect x="2.1" y="8.4" width="1" height="1.3"/><rect x="2.1" y="11" width="1" height="1.3"/><rect x="8.2" y="3.4" width="1.1" height="1"/><rect x="10.2" y="3.4" width="1.1" height="1"/><rect x="12.2" y="3.4" width="1.1" height="1"/><rect x="8.2" y="5.4" width="1.1" height="1"/><rect x="10.2" y="5.4" width="1.1" height="1"/><rect x="12.2" y="5.4" width="1.1" height="1"/><rect x="8.2" y="7.4" width="1.1" height="1"/><rect x="10.2" y="7.4" width="1.1" height="1"/><rect x="12.2" y="7.4" width="1.1" height="1"/><rect x="8.2" y="9.4" width="1.1" height="1"/><rect x="10.2" y="9.4" width="1.1" height="1"/><rect x="12.2" y="9.4" width="1.1" height="1"/><rect x="8.2" y="11.4" width="1.1" height="1"/><rect x="10.2" y="11.4" width="1.1" height="1"/><rect x="12.2" y="11.4" width="1.1" height="1"/><rect x="8.2" y="13" width="1.1" height="1"/><rect x="10.2" y="13" width="1.1" height="1"/><rect x="12.2" y="13" width="1.1" height="1"/></g></svg>
<div class="tr" style="left:1484.6px;top:742.28px">人才公寓0804</div>
<svg style="left:1382px;top:786.57px" width="8" height="6" viewBox="0 0 8 6"><path d="M0.2 0.6L4 5.4L7.8 0.6z" fill="#262626"/></svg>
<div class="chk" style="left:1399.3px;top:780.27px"></div>
<svg style="left:1435.8px;top:779.97px" width="16" height="16" viewBox="0 0 16 16"><g fill="#262626"><path d="M0.3 16V7.6L1.3 3.8L2.2 7.2L4.4 4.4V16z"/><path d="M4.2 16V2.6L5.6 1.2C6.6 -0.2 9.4 -0.2 10.4 1.2L11.2 2.4V16z"/><path d="M11 16V3.4L13.6 2.6V0.8H14.2V2.6L15.7 4V16z"/><rect x="0.1" y="15" width="15.8" height="1"/></g><g fill="#fff"><path d="M2 9.2L3.8 7V8.2L2.6 9.8V14.6H2z" opacity=".85"/><rect x="7.3" y="3.2" width=".7" height="11.4" opacity=".8"/><rect x="4.9" y="10" width=".8" height="1.8" opacity=".8"/><rect x="6" y="4.2" width=".6" height="1.2" opacity=".7"/><rect x="9" y="4.2" width=".6" height="1.2" opacity=".6"/><rect x="12.9" y="5.8" width=".9" height="1.1" opacity=".85"/><rect x="12.9" y="7.9" width=".9" height="1.1" opacity=".85"/><rect x="12.9" y="10" width=".9" height="1.1" opacity=".85"/><rect x="12.9" y="12.1" width=".9" height="1.1" opacity=".85"/><rect x="11.1" y="4" width=".5" height="11" opacity=".45"/></g></svg>
<div class="tr" style="left:1457.6px;top:777.97px">庐阳万象</div>
<svg style="left:1409.5px;top:820.66px" width="6" height="9" viewBox="0 0 6 9"><path d="M0.6 0.6L5.4 4.5L0.6 8.4z" fill="#262626"/></svg>
<div class="chk" style="left:1426.3px;top:815.96px"></div>
<svg style="left:1463.3px;top:816.36px" width="16" height="16" viewBox="0 0 16 16"><g fill="#262626"><path d="M0.5 15.2V3.6L4.7 2.4V15.2z"/><path d="M6 15.2V0.2L12.6 0.8L15 2V15.2z"/><path d="M0 16L0.4 15H15.6L16 16z"/></g><g fill="#fff" opacity=".78"><rect x="2.1" y="5.8" width="1" height="1.3"/><rect x="2.1" y="8.4" width="1" height="1.3"/><rect x="2.1" y="11" width="1" height="1.3"/><rect x="8.2" y="3.4" width="1.1" height="1"/><rect x="10.2" y="3.4" width="1.1" height="1"/><rect x="12.2" y="3.4" width="1.1" height="1"/><rect x="8.2" y="5.4" width="1.1" height="1"/><rect x="10.2" y="5.4" width="1.1" height="1"/><rect x="12.2" y="5.4" width="1.1" height="1"/><rect x="8.2" y="7.4" width="1.1" height="1"/><rect x="10.2" y="7.4" width="1.1" height="1"/><rect x="12.2" y="7.4" width="1.1" height="1"/><rect x="8.2" y="9.4" width="1.1" height="1"/><rect x="10.2" y="9.4" width="1.1" height="1"/><rect x="12.2" y="9.4" width="1.1" height="1"/><rect x="8.2" y="11.4" width="1.1" height="1"/><rect x="10.2" y="11.4" width="1.1" height="1"/><rect x="12.2" y="11.4" width="1.1" height="1"/><rect x="8.2" y="13" width="1.1" height="1"/><rect x="10.2" y="13" width="1.1" height="1"/><rect x="12.2" y="13" width="1.1" height="1"/></g></svg>
<div class="tr" style="left:1484.6px;top:813.66px">A区</div>
<svg style="left:1382px;top:857.95px" width="8" height="6" viewBox="0 0 8 6"><path d="M0.2 0.6L4 5.4L7.8 0.6z" fill="#262626"/></svg>
<div class="chk" style="left:1399.3px;top:851.65px"></div>
<svg style="left:1435.8px;top:851.35px" width="16" height="16" viewBox="0 0 16 16"><g fill="#262626"><path d="M0.3 16V7.6L1.3 3.8L2.2 7.2L4.4 4.4V16z"/><path d="M4.2 16V2.6L5.6 1.2C6.6 -0.2 9.4 -0.2 10.4 1.2L11.2 2.4V16z"/><path d="M11 16V3.4L13.6 2.6V0.8H14.2V2.6L15.7 4V16z"/><rect x="0.1" y="15" width="15.8" height="1"/></g><g fill="#fff"><path d="M2 9.2L3.8 7V8.2L2.6 9.8V14.6H2z" opacity=".85"/><rect x="7.3" y="3.2" width=".7" height="11.4" opacity=".8"/><rect x="4.9" y="10" width=".8" height="1.8" opacity=".8"/><rect x="6" y="4.2" width=".6" height="1.2" opacity=".7"/><rect x="9" y="4.2" width=".6" height="1.2" opacity=".6"/><rect x="12.9" y="5.8" width=".9" height="1.1" opacity=".85"/><rect x="12.9" y="7.9" width=".9" height="1.1" opacity=".85"/><rect x="12.9" y="10" width=".9" height="1.1" opacity=".85"/><rect x="12.9" y="12.1" width=".9" height="1.1" opacity=".85"/><rect x="11.1" y="4" width=".5" height="11" opacity=".45"/></g></svg>
<div class="tr" style="left:1457.6px;top:849.35px">亚夏小区</div>
<svg style="left:1409.5px;top:892.04px" width="6" height="9" viewBox="0 0 6 9"><path d="M0.6 0.6L5.4 4.5L0.6 8.4z" fill="#262626"/></svg>
<div class="chk" style="left:1426.3px;top:887.34px"></div>
<svg style="left:1463.3px;top:887.74px" width="16" height="16" viewBox="0 0 16 16"><g fill="#262626"><path d="M0.5 15.2V3.6L4.7 2.4V15.2z"/><path d="M6 15.2V0.2L12.6 0.8L15 2V15.2z"/><path d="M0 16L0.4 15H15.6L16 16z"/></g><g fill="#fff" opacity=".78"><rect x="2.1" y="5.8" width="1" height="1.3"/><rect x="2.1" y="8.4" width="1" height="1.3"/><rect x="2.1" y="11" width="1" height="1.3"/><rect x="8.2" y="3.4" width="1.1" height="1"/><rect x="10.2" y="3.4" width="1.1" height="1"/><rect x="12.2" y="3.4" width="1.1" height="1"/><rect x="8.2" y="5.4" width="1.1" height="1"/><rect x="10.2" y="5.4" width="1.1" height="1"/><rect x="12.2" y="5.4" width="1.1" height="1"/><rect x="8.2" y="7.4" width="1.1" height="1"/><rect x="10.2" y="7.4" width="1.1" height="1"/><rect x="12.2" y="7.4" width="1.1" height="1"/><rect x="8.2" y="9.4" width="1.1" height="1"/><rect x="10.2" y="9.4" width="1.1" height="1"/><rect x="12.2" y="9.4" width="1.1" height="1"/><rect x="8.2" y="11.4" width="1.1" height="1"/><rect x="10.2" y="11.4" width="1.1" height="1"/><rect x="12.2" y="11.4" width="1.1" height="1"/><rect x="8.2" y="13" width="1.1" height="1"/><rect x="10.2" y="13" width="1.1" height="1"/><rect x="12.2" y="13" width="1.1" height="1"/></g></svg>
<div class="tr" style="left:1484.6px;top:885.04px">1幢3单元</div>
<div class="abs" style="left:1896px;top:185px;width:7px;height:270px;border-radius:3.5px;background:#c1c1c1"></div>
<div id="foot"></div>
<div class="btn" style="left:1716px;top:937px;width:71px;height:36px;line-height:36px;border:1px solid #d9d9d9;color:#262626;background:#fff">取 消</div>
<div class="btn" style="left:1814px;top:937px;width:71px;height:36px;line-height:38px;color:#fff;background:#1e8cf5">提 交</div>
</body></html>
